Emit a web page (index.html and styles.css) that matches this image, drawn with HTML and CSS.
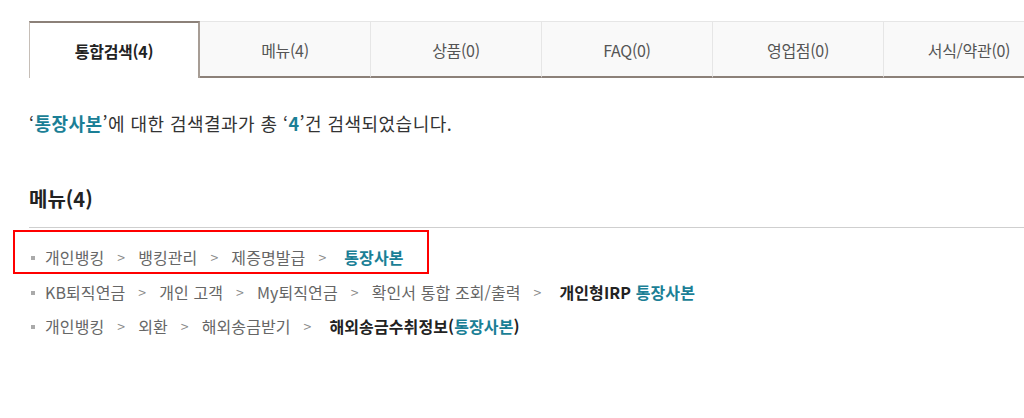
FILE: index.html
```html
<!DOCTYPE html>
<html lang="ko">
<head>
  <meta charset="UTF-8" />
  <meta name="viewport" content="width=device-width, initial-scale=1.0"/>
  <title>통합검색</title>
  <link rel="stylesheet" href="styles.css">
</head>
<body>
  <div class="wrap">
    <ul class="tabs">
      <li class="tab active">통합검색(4)</li>
      <li class="tab">메뉴(4)</li>
      <li class="tab">상품(0)</li>
      <li class="tab">FAQ(0)</li>
      <li class="tab">영업점(0)</li>
      <li class="tab">서식/약관(0)</li>
    </ul>

    <p class="summary">‘<em>통장사본</em>’에 대한 검색결과가 총 ‘<em>4</em>’건 검색되었습니다.</p>

    <h2 class="section-title">메뉴(4)</h2>

    <ul class="results">
      <li class="row">
        <span>개인뱅킹</span><span class="sep">&gt;</span>
        <span>뱅킹관리</span><span class="sep">&gt;</span>
        <span>제증명발급</span><span class="sep">&gt;</span>
        <strong class="last"><em>통장사본</em></strong>
        <span class="highlight-box"></span>
      </li>
      <li class="row">
        <span>KB퇴직연금</span><span class="sep">&gt;</span>
        <span>개인 고객</span><span class="sep">&gt;</span>
        <span>My퇴직연금</span><span class="sep">&gt;</span>
        <span>확인서 통합 조회/출력</span><span class="sep">&gt;</span>
        <strong class="last">개인형IRP <em>통장사본</em></strong>
      </li>
      <li class="row">
        <span>개인뱅킹</span><span class="sep">&gt;</span>
        <span>외환</span><span class="sep">&gt;</span>
        <span>해외송금받기</span><span class="sep">&gt;</span>
        <strong class="last">해외송금수취정보(<em>통장사본</em>)</strong>
      </li>
    </ul>
  </div>
</body>
</html>
```

FILE: styles.css
```css
html, body {
  margin: 0;
  padding: 0;
  background: #fff;
  overflow: hidden;
}
body {
  font-family: "Noto Sans CJK KR", "Noto Sans", sans-serif;
  color: #222;
}
.wrap {
  padding: 21px 0 0 29px;
}
em {
  font-style: normal;
  color: #1b7f96;
  font-weight: 700;
}

/* tabs */
.tabs {
  display: flex;
  list-style: none;
  margin: 0;
  padding: 0;
  width: 995px;
  overflow: hidden;
}
.tab {
  flex: 0 0 171px;
  box-sizing: border-box;
  height: 57px;
  display: flex;
  align-items: center;
  justify-content: center;
  font-size: 16px;
  color: #555;
  letter-spacing: -0.3px;
  background: #f9f9f9;
  border-top: 1px solid #e6e6e6;
  border-right: 1px solid #e6e6e6;
  border-bottom: 2px solid #8c8179;
  padding-top: 1px;
}
.tab.active {
  background: #fff;
  color: #222;
  font-weight: 700;
  border-top: 2px solid #8c8179;
  border-left: 1px solid #c6beb7;
  border-right: 2px solid #a79d95;
  border-bottom: none;
  padding-top: 0;
}

/* summary */
.summary {
  margin: 33px 0 0;
  font-size: 18px;
  line-height: 24px;
  color: #333;
  letter-spacing: 0.45px;
}

.section-title {
  margin: 51px 0 0;
  font-size: 20px;
  line-height: 26px;
  font-weight: 700;
  color: #222;
  padding-bottom: 15px;
  border-bottom: 1px solid #cfcfcf;
}

/* result rows */
.results {
  list-style: none;
  margin: 0;
  padding: 12px 0 0;
}
.row {
  position: relative;
  display: flex;
  align-items: center;
  height: 34.5px;
  font-size: 16px;
  color: #666;
  padding-left: 16px;
  letter-spacing: 0.1px;
}
.row::before {
  content: "";
  position: absolute;
  left: 2px;
  top: 16px;
  width: 4px;
  height: 4px;
  background: #aaa;
}
.sep {
  color: #888;
  margin: 0 13px;
  font-size: 14px;
}
.last {
  margin-left: 5px;
  color: #222;
  font-weight: 700;
}

/* annotation box */
.highlight-box {
  position: absolute;
  left: -16px;
  top: -10px;
  width: 412px;
  height: 40px;
  border: 2px solid #f00;
}
```
